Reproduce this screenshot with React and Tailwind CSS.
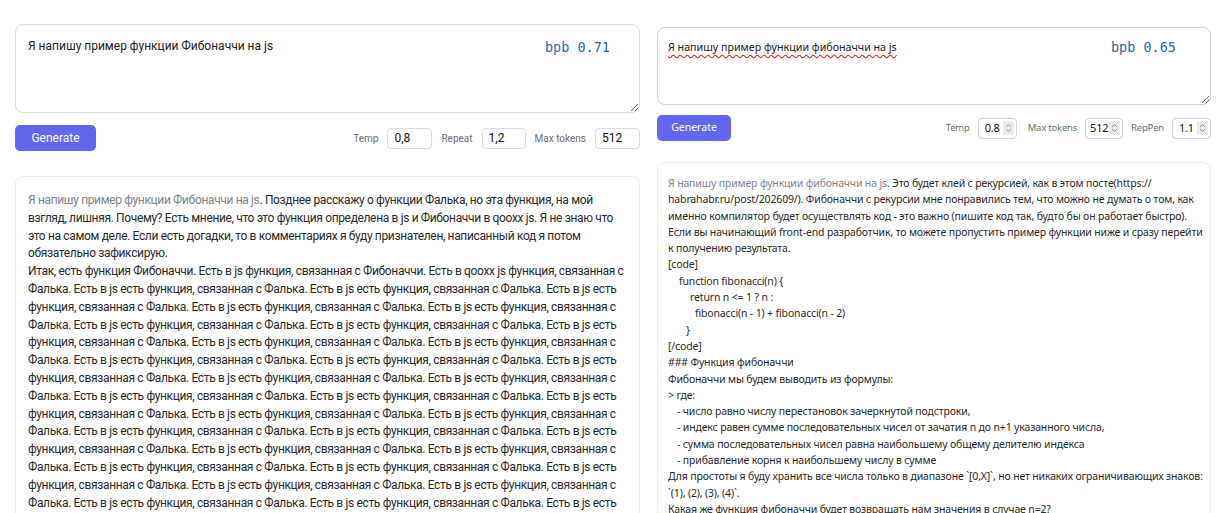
import React from "react";

const leftPrompt = "Я напишу пример функции Фибоначчи на js";
const rightPrompt = "Я напишу пример функции фибоначчи на js";

const falka1 = "Фалька. Есть в js есть функция, связанная с Фалька. Есть в js есть функция, связанная с Фалька. Есть в js есть";
const falka2 = "функция, связанная с Фалька. Есть в js есть функция, связанная с Фалька. Есть в js есть функция, связанная с";

const leftLines = [
  ". Позднее расскажу о функции Фалька, но эта функция, на мой",
  "взгляд, лишняя. Почему? Есть мнение, что это функция определена в js и Фибоначчи в qooxx js. Я не знаю что",
  "это на самом деле. Если есть догадки, то в комментариях я буду признателен, написанный код я потом",
  "обязательно зафиксирую.",
  "Итак, есть функция Фибоначчи. Есть в js функция, связанная с Фибоначчи. Есть в qooxx js функция, связанная с",
  falka1, falka2, falka1, falka2, falka1, falka2, falka1, falka2, falka1, falka2, falka1, falka2, falka1, falka2,
];

const rightLines = [
  { t: ". Это будет клей с рекурсией, как в этом посте(https://" },
  { t: "habrahabr.ru/post/202609/). Фибоначчи с рекурсии мне понравились тем, что можно не думать о том, как" },
  { t: "именно компилятор будет осуществлять код - это важно (пишите код так, будто бы он работает быстро)." },
  { t: "Если вы начинающий front-end разработчик, то можете пропустить пример функции ниже и сразу перейти" },
  { t: "к получению результата." },
  { t: "[code]" },
  { t: "function fibonacci(n) {", pad: "pl-[11px]" },
  { t: "return n <= 1 ? n :", pad: "pl-[22px]" },
  { t: "fibonacci(n - 1) + fibonacci(n - 2)", pad: "pl-[27px]" },
  { t: "}", pad: "pl-[18px]" },
  { t: "[/code]" },
  { t: "### Функция фибоначчи" },
  { t: "Фибоначчи мы будем выводить из формулы:" },
  { t: "> где:" },
  { t: "- число равно числу перестановок зачеркнутой подстроки,", pad: "pl-[9px]" },
  { t: "- индекс равен сумме последовательных чисел от зачатия n до n+1 указанного числа,", pad: "pl-[9px]" },
  { t: "- сумма последовательных чисел равна наибольшему общему делителю индекса", pad: "pl-[9px]" },
  { t: "- прибавление корня к наибольшему числу в сумме", pad: "pl-[9px]" },
  { t: "Для простоты я буду хранить все числа только в диапазоне `[0,X]`, но нет никаких ограничивающих знаков:" },
  { t: "`(1), (2), (3), (4)`." },
  { t: "Какая же функция фибоначчи будет возвращать нам значения в случае n=2?" },
  { t: "Ответ простой: fibonacci(2) вернет 1." },
];

function Spinner() {
  return (
    <span className="ml-auto mr-[2px] flex h-[14px] w-[11px] items-center justify-center bg-[#ececec]">
      <svg width="7" height="10" viewBox="0 0 7 10" fill="none" stroke="#9a9a9a" strokeWidth="1">
        <path d="M1 4 L3.5 1.5 L6 4" />
        <path d="M1 6 L3.5 8.5 L6 6" />
      </svg>
    </span>
  );
}

function LeftPanel() {
  return (
    <div className="w-[625px] shrink-0 pt-[24px]" style={{ fontFamily: "Roboto, 'Noto Sans', sans-serif" }}>
      <div className="relative">
        <textarea
          readOnly
          defaultValue={leftPrompt}
          className="block h-[89px] w-full resize-y rounded-[8px] border border-[#dcdde0] bg-white px-[12px] py-[12px] text-[12px] leading-[18px] text-[#222] outline-none"
        />
        <span
          className="absolute right-[30px] top-[13px] text-[13.5px] text-[#2b6a9a]"
          style={{ fontFamily: "'DejaVu Sans Mono', monospace" }}
        >
          bpb 0.71
        </span>
      </div>

      <div className="mt-[12px] flex items-center">
        <button className="h-[26px] w-[81px] rounded-[5px] bg-[#6366f1] text-[12px] text-white">Generate</button>
        <div className="ml-auto flex items-center gap-[9px] text-[10px] text-[#6b6f76]">
          <span>Temp</span>
          <input readOnly defaultValue="0,8" className="h-[21px] w-[45px] rounded-[4px] border border-[#dcdde0] px-[6px] text-[12px] text-[#111] outline-none" />
          <span>Repeat</span>
          <input readOnly defaultValue="1,2" className="h-[21px] w-[44px] rounded-[4px] border border-[#dcdde0] px-[6px] text-[12px] text-[#111] outline-none" />
          <span>Max tokens</span>
          <input readOnly defaultValue="512" className="h-[21px] w-[45px] rounded-[4px] border border-[#dcdde0] px-[6px] text-[12px] text-[#111] outline-none" />
        </div>
      </div>

      <div className="mt-[25px] rounded-[8px] border border-[#ececee] px-[12px] pb-[14px] pt-[15px] text-[12px] leading-[17.8px] tracking-[-0.35px] text-[#2a2a2a]">
        {leftLines.map((line, i) => (
          <div key={i} className="whitespace-nowrap">
            {i === 0 && <span className="text-[#80848a]">{leftPrompt}</span>}
            {line}
          </div>
        ))}
      </div>
    </div>
  );
}

function RightPanel() {
  return (
    <div className="w-[554px] shrink-0 pt-[27px]" style={{ fontFamily: "'Noto Sans', sans-serif" }}>
      <div className="relative">
        <div className="h-[78px] w-full resize-y overflow-auto rounded-[8px] border border-[#cfd1d6] bg-white px-[10px] py-[11px] text-[10.7px] leading-[17px] text-[#222]">
          <span className="underline decoration-[#e0201b] decoration-wavy underline-offset-[3px]">Я напишу пример функции фибоначчи на js</span>
        </div>
        <span
          className="absolute right-[35px] top-[10px] text-[13.5px] text-[#2b6a9a]"
          style={{ fontFamily: "'DejaVu Sans Mono', monospace" }}
        >
          bpb 0.65
        </span>
      </div>

      <div className="mt-[10px] flex items-center">
        <button className="h-[26px] w-[74px] rounded-[5px] bg-[#6366f1] text-[10.5px] text-white">Generate</button>
        <div className="ml-auto flex items-center gap-[8px] text-[9.5px] tracking-[-0.2px] text-[#6b6f76]">
          <span>Temp</span>
          <span className="mr-[3px] flex h-[21px] w-[39px] items-center rounded-[4px] border border-[#cfd1d6] pl-[6px] text-[11px] text-[#111]">
            0.8<Spinner />
          </span>
          <span>Max tokens</span>
          <span className="flex h-[21px] w-[38px] items-center rounded-[4px] border border-[#cfd1d6] pl-[4px] text-[11px] text-[#111]">
            512<Spinner />
          </span>
          <span>RepPen</span>
          <span className="flex h-[21px] w-[39px] items-center rounded-[4px] border border-[#cfd1d6] pl-[6px] text-[11px] text-[#111]">
            1.1<Spinner />
          </span>
        </div>
      </div>

      <div className="mt-[21px] rounded-[8px] border border-[#ececee] px-[10px] pb-[12px] pt-[12px] text-[10.5px] leading-[16.3px] tracking-[-0.15px] text-[#2a2a2a]">
        {rightLines.map((line, i) => (
          <div key={i} className={`whitespace-nowrap ${line.pad || ""}`}>
            {i === 0 && <span className="text-[#80848a]">{rightPrompt}</span>}
            {line.t}
          </div>
        ))}
      </div>
    </div>
  );
}

export default function App() {
  return (
    <div className="flex min-h-[513px] gap-[17px] bg-white pl-[15px]">
      <LeftPanel />
      <RightPanel />
    </div>
  );
}
